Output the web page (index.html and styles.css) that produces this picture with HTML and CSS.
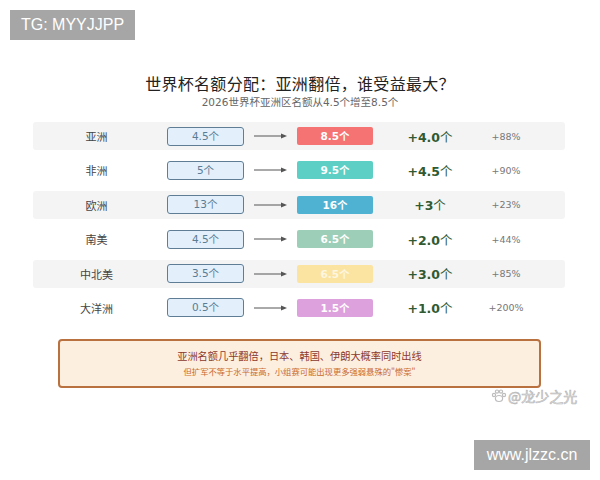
FILE: index.html
```html
<!DOCTYPE html>
<html lang="zh">
<head>
<meta charset="utf-8">
<link rel="stylesheet" href="styles.css">
</head>
<body>
<div class="page">
  <header class="head">
    <h1 class="title">世界杯名额分配：亚洲翻倍，谁受益最大？</h1>
    <p class="subtitle">2026世界杯亚洲区名额从4.5个增至8.5个</p>
  </header>
  <div class="table">
    <div class="row band">
      <span class="name">亚洲</span>
      <span class="old">4.5个</span>
      <span class="arrow"><svg width="33" height="8" viewBox="0 0 33 8"><line x1="0" y1="4" x2="28" y2="4" stroke="#555" stroke-width="1"/><path d="M27 1.5 L33 4 L27 6.5 Z" fill="#555"/></svg></span>
      <span class="new c-red">8.5个</span>
      <span class="diff"><b>+4.0</b>个</span>
      <span class="pct">+88%</span>
    </div>
    <div class="row">
      <span class="name">非洲</span>
      <span class="old">5个</span>
      <span class="arrow"><svg width="33" height="8" viewBox="0 0 33 8"><line x1="0" y1="4" x2="28" y2="4" stroke="#555" stroke-width="1"/><path d="M27 1.5 L33 4 L27 6.5 Z" fill="#555"/></svg></span>
      <span class="new c-teal">9.5个</span>
      <span class="diff"><b>+4.5</b>个</span>
      <span class="pct">+90%</span>
    </div>
    <div class="row band">
      <span class="name">欧洲</span>
      <span class="old">13个</span>
      <span class="arrow"><svg width="33" height="8" viewBox="0 0 33 8"><line x1="0" y1="4" x2="28" y2="4" stroke="#555" stroke-width="1"/><path d="M27 1.5 L33 4 L27 6.5 Z" fill="#555"/></svg></span>
      <span class="new c-blue">16个</span>
      <span class="diff"><b>+3</b>个</span>
      <span class="pct">+23%</span>
    </div>
    <div class="row">
      <span class="name">南美</span>
      <span class="old">4.5个</span>
      <span class="arrow"><svg width="33" height="8" viewBox="0 0 33 8"><line x1="0" y1="4" x2="28" y2="4" stroke="#555" stroke-width="1"/><path d="M27 1.5 L33 4 L27 6.5 Z" fill="#555"/></svg></span>
      <span class="new c-sage">6.5个</span>
      <span class="diff"><b>+2.0</b>个</span>
      <span class="pct">+44%</span>
    </div>
    <div class="row band">
      <span class="name">中北美</span>
      <span class="old">3.5个</span>
      <span class="arrow"><svg width="33" height="8" viewBox="0 0 33 8"><line x1="0" y1="4" x2="28" y2="4" stroke="#555" stroke-width="1"/><path d="M27 1.5 L33 4 L27 6.5 Z" fill="#555"/></svg></span>
      <span class="new c-yellow">6.5个</span>
      <span class="diff"><b>+3.0</b>个</span>
      <span class="pct">+85%</span>
    </div>
    <div class="row">
      <span class="name">大洋洲</span>
      <span class="old">0.5个</span>
      <span class="arrow"><svg width="33" height="8" viewBox="0 0 33 8"><line x1="0" y1="4" x2="28" y2="4" stroke="#555" stroke-width="1"/><path d="M27 1.5 L33 4 L27 6.5 Z" fill="#555"/></svg></span>
      <span class="new c-pink">1.5个</span>
      <span class="diff"><b>+1.0</b>个</span>
      <span class="pct">+200%</span>
    </div>
  </div>
  <div class="note">
    <p class="note-main">亚洲名额几乎翻倍，日本、韩国、伊朗大概率同时出线</p>
    <p class="note-sub">但扩军不等于水平提高，小组赛可能出现更多强弱悬殊的"惨案"</p>
  </div>
</div>
<div class="tag tag-tg">TG: MYYJJPP</div>
<div class="watermark"><svg width="16" height="14" viewBox="0 0 16 14"><g fill="none" stroke="#bdbdbd" stroke-width="1.2"><ellipse cx="8" cy="9.5" rx="3.6" ry="3"/><circle cx="3" cy="6" r="1.6"/><circle cx="6" cy="2.6" r="1.6"/><circle cx="10" cy="2.6" r="1.6"/><circle cx="13" cy="6" r="1.6"/></g></svg><span>@龙少之光</span></div>
<div class="tag tag-site">www.jlzzc.cn</div>
</body>
</html>
```

FILE: styles.css
```css
html, body {
  margin: 0;
  padding: 0;
  background: #ffffff;
}
body {
  width: 600px;
  height: 480px;
  position: relative;
  overflow: hidden;
  font-family: "DejaVu Sans", "Noto Sans CJK SC", sans-serif;
  color: #333;
}
.page {
  padding-top: 73px;
}
.head {
  text-align: center;
}
.title {
  margin: 0;
  font-size: 16px;
  line-height: 20px;
  font-weight: normal;
  color: #222;
  letter-spacing: 0.3px;
  font-family: "Noto Sans CJK SC", sans-serif;
}
.subtitle {
  margin: 2px 0 0;
  font-size: 10.5px;
  line-height: 14px;
  color: #666;
}
.table {
  margin: 13px 0 0 33px;
  width: 532px;
  display: flex;
  flex-direction: column;
  gap: 6.4px;
}
.row {
  height: 28px;
  display: grid;
  grid-template-columns: 127px 84px 53px 76px 114px 38px 40px;
  align-items: center;
  border-radius: 3px;
}
.row.band {
  background: #f4f4f4;
}
.name {
  text-align: center;
  font-size: 11px;
  color: #444;
  font-family: "Noto Sans CJK SC", sans-serif;
}
.old {
  justify-self: end;
  box-sizing: border-box;
  width: 77px;
  height: 19px;
  line-height: 17px;
  text-align: center;
  font-size: 10.5px;
  color: #5a7d95;
  background: #e3effa;
  border: 1px solid #5f7e96;
  border-radius: 3px;
}
.arrow {
  display: flex;
  justify-content: center;
}
.arrow svg {
  display: block;
}
.new {
  box-sizing: border-box;
  width: 76px;
  height: 18px;
  line-height: 18px;
  text-align: center;
  font-size: 10.5px;
  font-weight: bold;
  color: #ffffff;
  border-radius: 2px;
}
.c-red { background: #f67373; }
.c-teal { background: #5dcfc5; }
.c-blue { background: #50b2d2; }
.c-sage { background: #9dceb8; }
.c-yellow { background: #fbe4a2; color: #fdf6e0; }
.c-pink { background: #dda1dd; }
.diff {
  text-align: center;
  font-size: 12.5px;
  color: #2f5a32;
}
.diff b {
  font-weight: bold;
}
.pct {
  text-align: center;
  font-size: 9.5px;
  color: #777;
  white-space: nowrap;
}
.note {
  margin: 17px 0 0 58px;
  width: 483px;
  height: 49px;
  box-sizing: border-box;
  border: 2px solid #b8713f;
  border-radius: 4px;
  background: #fdefe0;
  display: flex;
  flex-direction: column;
  align-items: center;
  justify-content: center;
  gap: 4px;
}
.note p {
  margin: 0;
  font-family: "Noto Sans CJK SC", sans-serif;
}
.note-main {
  font-size: 10.2px;
  line-height: 13px;
  color: #8a3a2e;
}
.note-sub {
  font-size: 8.3px;
  line-height: 11px;
  color: #c96a2c;
}
.tag {
  position: absolute;
  background: #a6a6a6;
  color: #ffffff;
  font-family: "Liberation Sans", Arial, sans-serif;
  font-size: 16px;
  display: flex;
  align-items: center;
  justify-content: center;
}
.tag-tg {
  left: 10px;
  top: 10px;
  width: 125px;
  height: 30px;
}
.tag-site {
  left: 474px;
  top: 440px;
  width: 116px;
  height: 30px;
}
.watermark {
  position: absolute;
  left: 491px;
  top: 388px;
  display: flex;
  align-items: center;
  gap: 1px;
  font-family: "Noto Sans CJK SC", sans-serif;
  font-size: 14px;
  line-height: 16px;
  color: #e8e8e8;
  -webkit-text-stroke: 0.6px #b5b5b5;
}
```
